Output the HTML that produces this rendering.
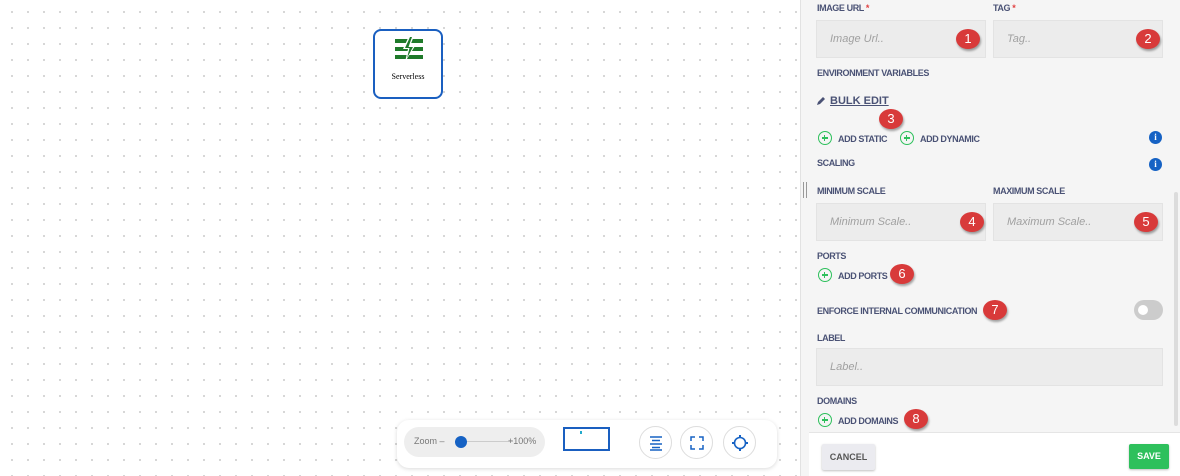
<!DOCTYPE html>
<html><head><style>
*{box-sizing:border-box;margin:0;padding:0}
body{width:1180px;height:476px;overflow:hidden;position:relative;font-family:"Liberation Sans",sans-serif;background:#fff;background-image:radial-gradient(circle,#d4d4d4 1px,transparent 1.2px);background-size:16px 16px;background-position:4px 4px}
.a{position:absolute}
.panel{left:800px;top:0;width:380px;height:476px;background:#f5f5f5;border-left:1px solid #e2e2e2}
.lb{position:absolute;font-size:9px;font-weight:bold;color:#4a5275;letter-spacing:-0.4px}
.inp{position:absolute;background:#ececec;border:1px solid #e3e3e3;font-style:italic;color:#a0a0a0;font-size:11px;padding-left:13px;display:flex;align-items:center}
.bd{position:absolute;width:24px;height:20px;border-radius:50%;background:#d83a3a;color:#fff;font-size:13px;text-align:center;line-height:20px;box-shadow:1px 2px 2px rgba(0,0,0,.35)}
.pl{position:absolute;width:14px;height:14px;border:1.6px solid #2ec05c;border-radius:50%}
.pl:before{content:"";position:absolute;left:2.5px;top:5px;width:6px;height:1.6px;background:#2ec05c}
.pl:after{content:"";position:absolute;left:4.7px;top:2.6px;width:1.6px;height:6px;background:#2ec05c}
.info{position:absolute;width:13px;height:13px;border-radius:50%;background:#1662c4;color:#fff;font-size:9px;font-weight:bold;text-align:center;line-height:13px;font-family:"Liberation Serif",serif}
.cb{position:absolute;width:33px;height:33px;border-radius:50%;border:1px solid #ddd;background:#fff}
</style></head><body>
<div class="a" style="left:373px;top:29px;width:70px;height:70px;border:2px solid #1a5fc0;border-radius:8px;background:#fff">
<svg class="a" style="left:20px;top:5px" width="28" height="26" viewBox="0 0 28 26"><g fill="#1f7a2a"><rect x="0" y="3" width="28" height="4"/><rect x="0" y="11" width="28" height="4"/><rect x="0" y="19" width="28" height="4"/></g><path d="M14 0 L8 13 L13 13 L10 26 L20 10 L15 10 L19 0Z" fill="#fff"/><path d="M15 1 L10 12 L14.5 12 L12 22 L18 11 L13.5 11 L17 1Z" fill="#1f7a2a"/></svg>
<div class="a" style="left:0;width:66px;top:41px;text-align:center;font-family:'Liberation Serif',serif;font-size:8px">Serverless</div>
</div>

<div class="a" style="left:397px;top:420px;width:380px;height:48px;background:#fff;border-radius:12px;box-shadow:0 1px 4px rgba(0,0,0,.15)"></div>
<div class="a" style="left:404px;top:427px;width:141px;height:30px;background:#eee;border-radius:15px"></div>
<div class="a" style="left:414px;top:436px;font-size:9px;color:#777">Zoom –</div>
<div class="a" style="left:455px;top:441px;width:58px;height:1px;background:#ccc"></div>
<div class="a" style="left:455px;top:436px;width:12px;height:12px;border-radius:50%;background:#1662c4"></div>
<div class="a" style="left:508px;top:436px;font-size:9px;color:#777">+100%</div>
<div class="a" style="left:563px;top:427px;width:47px;height:24px;border:2px solid #1a5fc0"></div>
<div class="a" style="left:580px;top:431px;width:2px;height:3px;background:#2ac"></div>
<div class="cb" style="left:639px;top:426px"></div><div class="cb" style="left:680px;top:426px"></div><div class="cb" style="left:723px;top:426px"></div>
<svg class="a" style="left:648px;top:435px" width="16" height="16"><g stroke="#1662c4" stroke-width="1.5"><path d="M2 2H14M4 5.5H12M2 9H14M4 12.5H12M2 15H14"/></g></svg>
<svg class="a" style="left:689px;top:435px" width="16" height="16"><g stroke="#1662c4" stroke-width="1.5" fill="none"><path d="M2 6V2H6M10 2H14V6M14 10V14H10M6 14H2V10"/></g></svg>
<svg class="a" style="left:731px;top:434px" width="18" height="18"><circle cx="9" cy="9" r="5.5" stroke="#1662c4" stroke-width="1.6" fill="none"/><g fill="#1662c4"><rect x="8" y="1" width="2" height="3"/><rect x="8" y="14" width="2" height="3"/><rect x="1" y="8" width="3" height="2"/><rect x="14" y="8" width="3" height="2"/></g></svg>

<div class="a panel"></div>
<div class="a" style="left:803px;top:182px;width:1px;height:16px;background:#999"></div>
<div class="a" style="left:806px;top:182px;width:1px;height:16px;background:#999"></div>
<div class="a" style="left:1174px;top:192px;width:4px;height:234px;background:#dcdcdc;border-radius:2px"></div>

<div class="lb" style="left:817px;top:3px">IMAGE URL <span style="color:#e04040">*</span></div>
<div class="lb" style="left:993px;top:3px">TAG <span style="color:#e04040">*</span></div>
<div class="inp" style="left:816px;top:20px;width:170px;height:38px">Image Url..</div>
<div class="inp" style="left:993px;top:20px;width:170px;height:38px">Tag..</div>
<div class="bd" style="left:956px;top:29px">1</div>
<div class="bd" style="left:1136px;top:29px">2</div>
<div class="lb" style="left:817px;top:68px">ENVIRONMENT VARIABLES</div>
<svg class="a" style="left:817px;top:96px" width="9" height="9"><path d="M0 9L1 6L6 1L8 3L3 8Z" fill="#4a5275"/></svg>
<div class="a" style="left:830px;top:95px;font-size:11px;font-weight:bold;color:#4a5275;text-decoration:underline">BULK EDIT</div>
<div class="bd" style="left:879px;top:109px">3</div>
<div class="pl" style="left:818px;top:131px"></div>
<div class="lb" style="left:838px;top:134px">ADD STATIC</div>
<div class="pl" style="left:900px;top:131px"></div>
<div class="lb" style="left:920px;top:134px">ADD DYNAMIC</div>
<div class="info" style="left:1149px;top:131px">i</div>
<div class="lb" style="left:817px;top:158px">SCALING</div>
<div class="info" style="left:1149px;top:158px">i</div>
<div class="lb" style="left:817px;top:186px">MINIMUM SCALE</div>
<div class="lb" style="left:993px;top:186px">MAXIMUM SCALE</div>
<div class="inp" style="left:816px;top:203px;width:170px;height:38px">Minimum Scale..</div>
<div class="inp" style="left:993px;top:203px;width:170px;height:38px">Maximum Scale..</div>
<div class="bd" style="left:960px;top:212px">4</div>
<div class="bd" style="left:1134px;top:212px">5</div>
<div class="lb" style="left:817px;top:251px">PORTS</div>
<div class="pl" style="left:818px;top:268px"></div>
<div class="lb" style="left:838px;top:271px">ADD PORTS</div>
<div class="bd" style="left:890px;top:264px">6</div>
<div class="lb" style="left:817px;top:306px">ENFORCE INTERNAL COMMUNICATION</div>
<div class="bd" style="left:983px;top:300px">7</div>
<div class="a" style="left:1134px;top:300px;width:29px;height:20px;border-radius:10px;background:#ccc"></div>
<div class="a" style="left:1138px;top:305px;width:10px;height:10px;border-radius:50%;background:#fff"></div>
<div class="lb" style="left:817px;top:333px">LABEL</div>
<div class="inp" style="left:816px;top:348px;width:347px;height:38px">Label..</div>
<div class="lb" style="left:817px;top:396px">DOMAINS</div>
<div class="pl" style="left:818px;top:413px"></div>
<div class="lb" style="left:838px;top:416px">ADD DOMAINS</div>
<div class="bd" style="left:904px;top:409px">8</div>

<div class="a" style="left:809px;top:432px;width:371px;height:44px;background:#fff;border-top:1px solid #e5e5e5"></div>
<div class="a" style="left:822px;top:444px;width:53px;height:26px;background:#ebebf0;border-radius:2px;box-shadow:0 1px 2px rgba(0,0,0,.25);font-size:9px;font-weight:bold;color:#555;text-align:center;line-height:26px">CANCEL</div>
<div class="a" style="left:1129px;top:444px;width:40px;height:25px;background:#2ec05c;border-radius:2px;box-shadow:0 1px 2px rgba(0,0,0,.25);font-size:9px;font-weight:bold;color:#fff;text-align:center;line-height:25px">SAVE</div>
</body></html>
